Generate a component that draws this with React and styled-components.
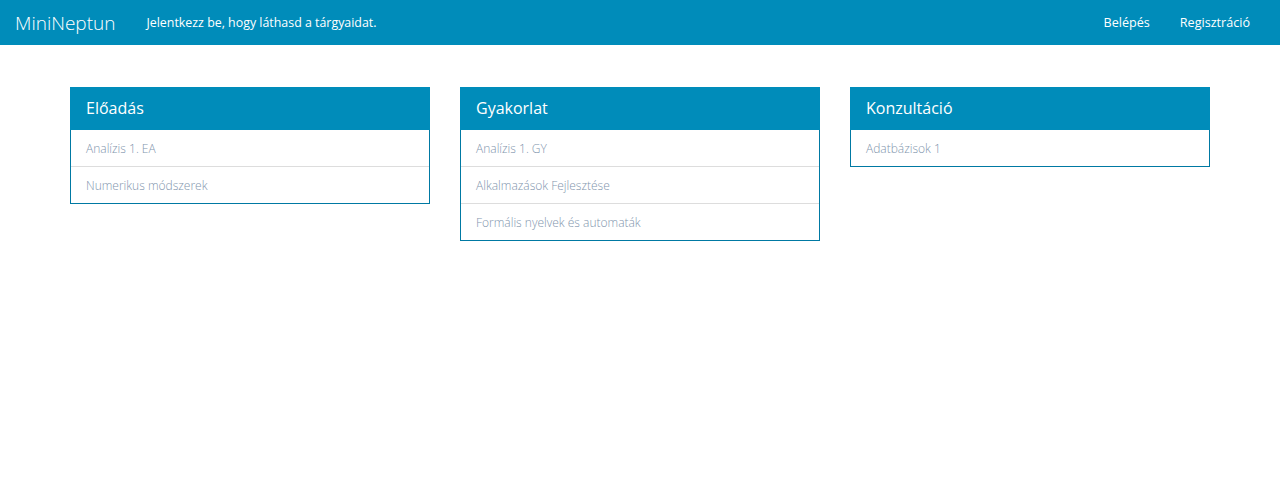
import React from "react";
import styled, { createGlobalStyle } from "styled-components";

const Global = createGlobalStyle`
  html, body { margin: 0; padding: 0; background: #fff; }
  body { font-family: "Open Sans", "Noto Sans", sans-serif; }
  * { box-sizing: border-box; }
`;

const Navbar = styled.nav`
  height: 45px;
  background: #008cba;
  display: flex;
  align-items: center;
  padding: 0 30px 0 15px;
  color: #fff;
`;

const Brand = styled.a`
  font-size: 19px;
  font-weight: 300;
  color: #fff;
  margin-right: 31px;
  text-decoration: none;
`;

const NavText = styled.span`
  font-size: 12.4px;
  font-weight: 400;
  color: #fff;
`;

const NavRight = styled.div`
  margin-left: auto;
  display: flex;
  gap: 30px;
`;

const NavLink = styled.a`
  font-size: 12.6px;
  color: #fff;
  text-decoration: none;
`;

const Container = styled.main`
  width: 1140px;
  margin: 42px auto 0;
  display: grid;
  grid-template-columns: repeat(3, 360px);
  column-gap: 30px;
  align-items: start;
`;

const Panel = styled.section`
  border: 1px solid #0079a3;
  background: #fff;
`;

const PanelHeading = styled.h3`
  margin: -1px -1px 0;
  height: 43px;
  background: #008cba;
  color: #fff;
  font-size: 16px;
  font-weight: 400;
  display: flex;
  align-items: center;
  padding: 0 16px 2px;
`;

const Item = styled.div`
  height: 36px;
  display: flex;
  align-items: center;
  padding: 0 15px;
  font-size: 12px;
  font-weight: 300;
  color: #8195ad;
  & + & {
    border-top: 1px solid #dddddd;
    height: 37px;
  }
`;

const groups = [
  { title: "Előadás", items: ["Analízis 1. EA", "Numerikus módszerek"] },
  { title: "Gyakorlat", items: ["Analízis 1. GY", "Alkalmazások Fejlesztése", "Formális nyelvek és automaták"] },
  { title: "Konzultáció", items: ["Adatbázisok 1"] },
];

export default function App() {
  return (
    <>
      <Global />
      <Navbar>
        <Brand href="#">MiniNeptun</Brand>
        <NavText>Jelentkezz be, hogy láthasd a tárgyaidat.</NavText>
        <NavRight>
          <NavLink href="#">Belépés</NavLink>
          <NavLink href="#">Regisztráció</NavLink>
        </NavRight>
      </Navbar>
      <Container>
        {groups.map((g) => (
          <Panel key={g.title}>
            <PanelHeading>{g.title}</PanelHeading>
            {g.items.map((it) => (
              <Item key={it}>{it}</Item>
            ))}
          </Panel>
        ))}
      </Container>
    </>
  );
}
